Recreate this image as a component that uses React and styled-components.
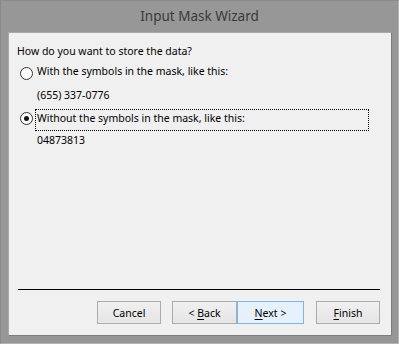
import * as React from 'react';
import styled, { createGlobalStyle } from 'styled-components';

const GlobalStyle = createGlobalStyle`
  html, body {
    margin: 0;
    padding: 0;
    background: #ffffff;
  }
  body {
    font-family: "Segoe UI", "Noto Sans", sans-serif;
    font-size: 10.5px;
  }
`;

const Window = styled.div`
  width: 399px;
  height: 344px;
  box-sizing: border-box;
  background: #979797;
  border: 1px solid #8a8a8a;
  border-right-color: #b3b3b3;
  border-bottom-color: #b3b3b3;
  display: flex;
  flex-direction: column;
`;

const TitleBar = styled.div`
  height: 30px;
  display: flex;
  align-items: center;
  justify-content: center;
  font-size: 13.5px;
  color: #3a3a3a;
  padding-bottom: 1px;
`;

const Client = styled.div`
  flex: 1;
  margin: 0 6px 7px 7px;
  background: #f0f0f0;
  border: 1px solid #a9a9a9;
  border-right-color: #7c7c7c;
  border-bottom-color: #7c7c7c;
  display: flex;
  flex-direction: column;
  padding: 11px 11px 11px 8px;
`;

const Question = styled.div`
  color: #000;
  line-height: 15px;
  margin-bottom: 3px;
`;

const OptionRow = styled.div`
  display: flex;
  align-items: center;
  height: 22px;
  padding-left: 3px;
`;

const Radio = styled.span`
  width: 13px;
  height: 13px;
  box-sizing: border-box;
  border-radius: 50%;
  border: 1px solid #333333;
  background: #ffffff;
  display: flex;
  align-items: center;
  justify-content: center;
  flex-shrink: 0;
  &::after {
    content: '';
    width: 5px;
    height: 5px;
    border-radius: 50%;
    background: ${p => (p.$checked ? '#111111' : 'transparent')};
  }
`;

const Label = styled.span`
  margin-left: 2px;
  padding: 1px 1px 4px;
  line-height: 15px;
  color: #000;
  border: 1px dotted ${p => (p.$focused ? '#000' : 'transparent')};
  flex: ${p => (p.$focused ? 1 : '0 0 auto')};
  margin-right: ${p => (p.$focused ? '11px' : '0')};
  margin-top: ${p => (p.$focused ? '3px' : '0')};
`;

const Sample = styled.div`
  padding-left: 20px;
  height: 23px;
  line-height: 23px;
  color: #000;
`;

const Spacer = styled.div`
  flex: 1;
`;

const Separator = styled.div`
  height: 1px;
  background: #000;
  margin: 0 0 11px 1px;
`;

const ButtonRow = styled.div`
  display: flex;
  justify-content: flex-end;
  align-items: center;
`;

const Button = styled.button`
  width: ${p => p.$w || 64}px;
  height: 23px;
  box-sizing: border-box;
  margin-left: ${p => p.$gap || 0}px;
  padding: 0;
  font: inherit;
  color: #000;
  background: ${p => (p.$default ? '#e5f1fb' : 'linear-gradient(#f0f0f0, #e5e5e5)')};
  border: 1px solid ${p => (p.$default ? '#7eb4ea' : '#acacac')};
  border-radius: 0;
  u {
    text-underline-offset: 2px;
  }
`;

function App() {
  return (
    <>
      <GlobalStyle />
      <Window>
        <TitleBar>Input Mask Wizard</TitleBar>
        <Client>
          <Question>How do you want to store the data?</Question>
          <OptionRow>
            <Radio />
            <Label>With the symbols in the mask, like this:</Label>
          </OptionRow>
          <Sample>(655) 337-0776</Sample>
          <OptionRow>
            <Radio $checked />
            <Label $focused>Without the symbols in the mask, like this:</Label>
          </OptionRow>
          <Sample>04873813</Sample>
          <Spacer />
          <Separator />
          <ButtonRow>
            <Button $w={64}>Cancel</Button>
            <Button $w={65} $gap={11}>&lt; <u>B</u>ack</Button>
            <Button $w={67} $default>
              <u>N</u>ext &gt;
            </Button>
            <Button $w={64} $gap={12}>
              <u>F</u>inish
            </Button>
          </ButtonRow>
        </Client>
      </Window>
    </>
  );
}

export default App;
